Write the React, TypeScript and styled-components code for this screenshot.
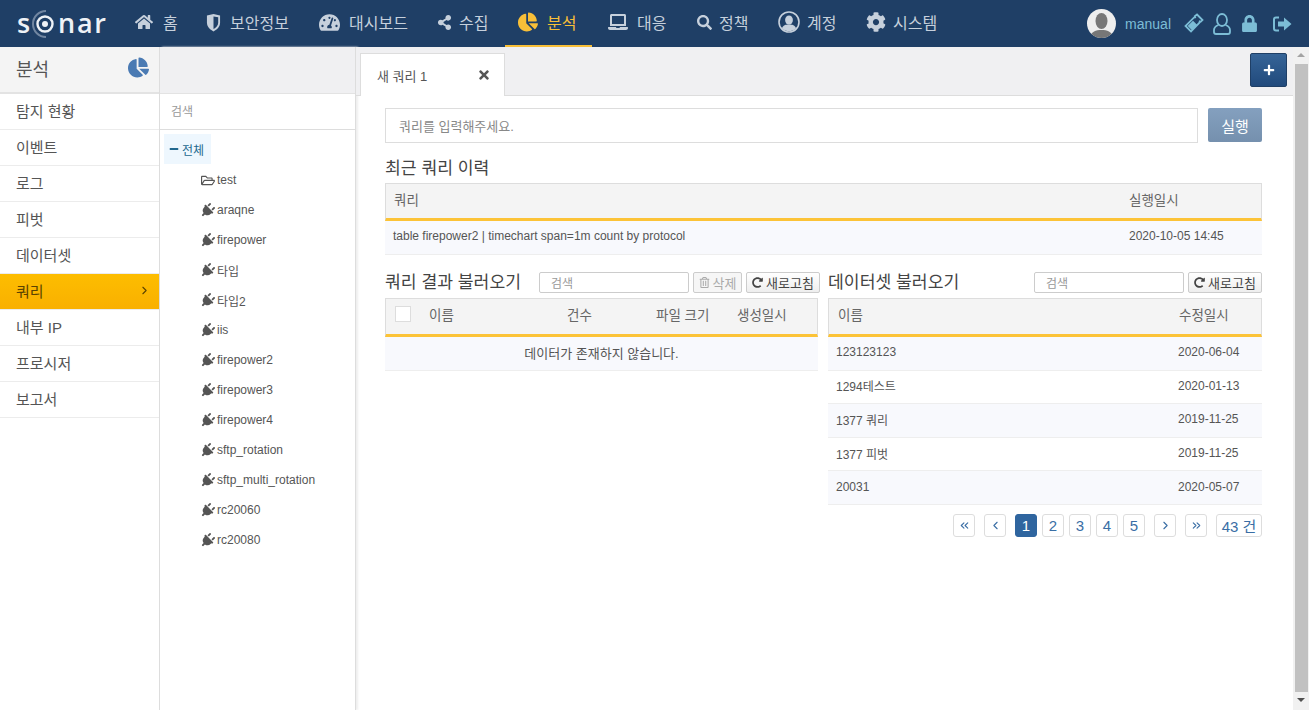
import React from "react";
import styled, { createGlobalStyle } from "styled-components";
import { FaHome, FaShareAlt, FaPlug, FaRegFolderOpen, FaLaptop, FaSearch, FaCog, FaLock, FaTachometerAlt, FaChartPie, FaTimes, FaPlus, FaRedoAlt, FaRegTrashAlt, FaMinus } from "react-icons/fa";
import { ChevronLeft, ChevronRight, ChevronsLeft, ChevronsRight } from "lucide-react";

const Global = createGlobalStyle`
  html, body { margin: 0; padding: 0; height: 100%; overflow: hidden; background: #fff; }
  body { font-family: "Liberation Sans", "Noto Sans CJK KR", sans-serif; color: #555; font-size: 12px; }
  * { box-sizing: border-box; }
`;
const Shell = styled.div`width: 1309px; height: 710px; display: flex; flex-direction: column; overflow: hidden;`;
const Header = styled.header`height: 47px; background: #1f3f66; display: flex; align-items: stretch; flex: none;`;
const Logo = styled.div`width: 122px; flex: none; display: flex; align-items: center; padding: 0 0 2px 17px; color: #eef2f6; font-size: 27px; font-weight: 600; letter-spacing: 1.8px; font-family: "Open Sans", sans-serif;`;
const LogoO = styled.svg`width: 26px; height: 30px; margin: 3px 1px 0 -1px; flex: none;`;
const Nav = styled.nav`display: flex; align-items: stretch; flex: 1;`;
const NavItem = styled.div<{ $on?: boolean; $w: number; $after?: number }>`
  width: ${p => p.$w}px; margin-right: ${p => p.$after ?? 0}px; display: flex; align-items: center; flex: none; padding: 0 0 1px 13px;
  font-size: 16px; white-space: nowrap; color: ${p => (p.$on ? "#f8bf38" : "#c6d0dc")};
  border-bottom: 2px solid ${p => (p.$on ? "#f8bf38" : "transparent")};
`;
const NavIcon = styled.span<{ $w: number; $gap: number; $size: number }>`
  width: ${p => p.$w}px; margin-right: ${p => p.$gap}px; display: flex; justify-content: center; flex: none; font-size: ${p => p.$size}px;
`;
const UserArea = styled.div`display: flex; align-items: center; padding-right: 17px; color: #7cbdd6; font-size: 14px;`;
const Avatar = styled.div`width: 29px; height: 29px; border-radius: 50%; background: #eee; overflow: hidden; margin-right: 9px; svg { display: block; }`;
const UserName = styled.span`margin-right: 12px;`;
const UserIcon = styled.span<{ $w: number; $gap: number; $size?: number }>`display: flex; justify-content: center; width: ${p => p.$w}px; margin-right: ${p => p.$gap}px; font-size: ${p => p.$size ?? 20}px;`;
const Body = styled.div`flex: 1; display: flex; min-height: 0;`;
const Side = styled.aside`width: 160px; flex: none; border-right: 1px solid #ddd; background: #fff;`;
const SideHead = styled.div`height: 47px; background: #f4f4f4; border-bottom: 2px solid #e3e3e3; display: flex; align-items: center; justify-content: space-between; padding: 0 10px 4px 16px; font-size: 18px; color: #555; svg { color: #4a7ab3; font-size: 21px; }`;
const SideItem = styled.div<{ $on?: boolean }>`
  height: 36px; display: flex; align-items: center; justify-content: space-between; padding: 0 8px 3px 16px; font-size: 15px;
  border-bottom: 1px solid #ececec; color: ${p => (p.$on ? "#5a4300" : "#555")};
  background: ${p => (p.$on ? "linear-gradient(#fdbd00,#f9b000)" : "#fff")};
`;
const TreeCol = styled.section`width: 196px; flex: none; border-right: 1px solid #ddd; box-shadow: 2px 0 2px #eee; background: #fff; display: flex; flex-direction: column;`;
const TreeTop = styled.div`height: 47px; background: #f0f0f2; border-bottom: 1px solid #e3e3e3; flex: none;`;
const TreeSearch = styled.div`height: 36px; flex: none; border-bottom: 1px solid #ddd; display: flex; align-items: center; padding: 0 0 2px 11px; color: #999; font-size: 12px;`;
const TreeList = styled.div`padding: 4px 4px; display: flex; flex-direction: column;`;
const TreeRoot = styled.div`height: 30px; width: 47px; margin-bottom: 1px; background: #eef7fe; display: flex; align-items: center; gap: 3px; padding-left: 5px; color: #22688f; font-size: 12px; svg { font-size: 10px; }`;
const TreeLeaf = styled.div`height: 30px; display: flex; align-items: center; gap: 2px; padding-left: 37px; color: #555; font-size: 12px;`;
const PlugIcon = styled(FaPlug)`width: 15px; height: 15px; margin: 0 0 0 -1px; flex: none; transform: rotate(45deg);`;
const FolderIcon = styled(FaRegFolderOpen)`width: 14px; height: 13px; flex: none;`;
const Main = styled.main`flex: 1; min-width: 0; display: flex; flex-direction: column;`;
const TabBar = styled.div`height: 49px; flex: none; background: #f0f0f2; border-bottom: 1px solid #ddd; display: flex; align-items: flex-end; justify-content: space-between; padding: 0 6px 0 4px;`;
const Tab = styled.div`width: 145px; height: 43px; background: #fff; border: 1px solid #ddd; border-bottom: none; display: flex; align-items: center; justify-content: space-between; padding: 0 13px 0 16px; font-size: 13px; margin-bottom: -1px; svg { font-size: 14px; color: #555; }`;
const AddBtn = styled.button`width: 37px; height: 34px; margin-bottom: 8px; border: 1px solid #1f3f66; border-radius: 2px; background: linear-gradient(#366497,#214a7c); color: #fff; display: flex; align-items: center; justify-content: center; padding: 0; font-size: 12px;`;
const Content = styled.div`flex: 1; padding: 12px 31px 0 29px;`;
const QueryRow = styled.div`display: flex; gap: 10px;`;
const QueryInput = styled.div`flex: 1; height: 35px; border: 1px solid #ddd; display: flex; align-items: center; padding-left: 13px; color: #888; font-size: 13px;`;
const RunBtn = styled.div`width: 54px; height: 34px; border-radius: 2px; background: linear-gradient(#84a0bf,#7590ae); color: #fff; display: flex; align-items: center; justify-content: center; font-size: 15px;`;
const Title = styled.h3`margin: 0; font-weight: 400; font-size: 17.2px; color: #444; line-height: 20px;`;
const RecentTitle = styled(Title)`margin: 15px 0 5px;`;
const TableHead = styled.div<{ $h: number; $pad?: number }>`height: ${p => p.$h}px; background: #f4f4f4; border: 1px solid #ddd; border-bottom: 3px solid #fcc337; display: flex; align-items: center; padding: 0 8px 4px ${p => p.$pad ?? 8}px; color: #666; font-size: 13.5px;`;
const Cell = styled.span<{ $w?: number; $flex?: boolean }>`
  ${p => (p.$flex ? "flex: 1;" : `width: ${p.$w}px; flex: none;`)}
`;
const Row = styled.div<{ $alt?: boolean }>`height: 33.6px; display: flex; align-items: center; padding: 0 8px 2px; color: #555; font-size: 12px; background: ${p => (p.$alt ? "#f8f9fd" : "#fff")}; border-bottom: 1px solid #eee;`;
const Empty = styled(Row)`justify-content: center; font-size: 13px;`;
const Columns = styled.div`display: flex; gap: 10px; margin-top: 16.4px;`;
const Col = styled.div<{ $w: number }>`width: ${p => p.$w}px; flex: none;`;
const ColHead = styled.div<{ $over?: number }>`display: flex; align-items: center; height: 24px; margin: 0 ${p => -(p.$over ?? 0)}px 3px 0; gap: 4px;`;
const ColTitle = styled(Title)`flex: 1; padding-bottom: 1px;`;
const SearchBox = styled.div`width: 150px; height: 21px; border: 1px solid #ccc; border-radius: 2px; display: flex; align-items: center; padding-left: 11px; color: #999; font-size: 12px;`;
const SmallBtn = styled.div<{ $off?: boolean; $w: number }>`width: ${p => p.$w}px; height: 21px; border: 1px solid #ccc; border-radius: 2px; display: flex; align-items: center; justify-content: center; gap: 3px; font-size: 13px; background: ${p => (p.$off ? "#f6f6f6" : "linear-gradient(#fff,#eee)")}; color: ${p => (p.$off ? "#aaa" : "#444")}; svg { font-size: 11px; }`;
const Check = styled.span`width: 16px; height: 16px; border: 1px solid #ddd; background: #fff; margin: 0 18px 0 1px; flex: none;`;
const Pager = styled.div`display: flex; justify-content: flex-end; margin-top: 9px; gap: 5px;`;
const Page = styled.div<{ $on?: boolean; $gap?: number; $w?: number }>`
  width: ${p => p.$w ?? 22}px; height: 23px; border: 1px solid #ddd; border-radius: 3px; display: flex; align-items: center; justify-content: center;
  font-size: 15px; margin-right: ${p => p.$gap ?? 0}px;
  color: ${p => (p.$on ? "#fff" : "#3a6ea5")}; background: ${p => (p.$on ? "#2f659f" : "#fff")}; border-color: ${p => (p.$on ? "#2f659f" : "#ddd")};
`;
const Scrollbar = styled.div`width: 16px; flex: none; background: #f1f1f1; display: flex; flex-direction: column; align-items: center;`;
const ArrowUp = styled.div`flex: none; width: 0; height: 0; margin: 6px 0 7px; border-left: 4px solid transparent; border-right: 4px solid transparent; border-bottom: 4px solid #a3a3a3;`;
const ArrowDown = styled.div`flex: none; width: 0; height: 0; margin: 6px 0 8px; border-left: 4px solid transparent; border-right: 4px solid transparent; border-top: 4px solid #505050;`;
const Thumb = styled.div`flex: 1; width: 13px; margin-left: 1px; background: #c1c1c1;`;

const Shield = () => (
  <svg viewBox="0 0 16 20" width="15" height="19">
    <path d="M1 2.500 8 1l7 1.500V10c0 5-4 8-7 9.500C5 18 1 15 1 10z" fill="#c6d0dc" />
    <path d="M8 3.500l5 1V10c0 3.500-2.500 5.500-5 7z" fill="#1f3f66" />
  </svg>
);
const Account = () => (
  <svg viewBox="0 0 22 22" width="22" height="22">
    <circle cx="11" cy="11" r="10" fill="none" stroke="#c6d0dc" strokeWidth="1.600" />
    <ellipse cx="11" cy="9" rx="3.900" ry="4.500" fill="#c6d0dc" />
    <path d="M4 17.500c.8-3.400 3.800-4 7-4s6.200.6 7 4c-3.800 3.400-10.200 3.400-14 0z" fill="#c6d0dc" />
  </svg>
);
const Ticket = () => (
  <svg viewBox="0 0 21 21" width="21" height="21" fill="none" stroke="#7cbdd6" strokeWidth="1.800">
    <path d="M14 1.500 19.500 7l-1.800 1.800-1-.4-.3 1.300L8 18.500 2.500 13l8.300-8.300 1.300-.3-.4-1z" />
    <path d="M6 13l4-4 3 3-4 4z" fill="#7cbdd6" />
  </svg>
);
const UserOutline = () => (
  <svg viewBox="0 0 18 22" width="18" height="22" fill="none" stroke="#7cbdd6" strokeWidth="1.800">
    <ellipse cx="9" cy="7" rx="5" ry="6" />
    <path d="M5.500 12C3 13 1 14.500 1 17v2c0 1.200 1 2 2 2h12c1 0 2-.8 2-2v-2c0-2.500-2-4-4.500-5" />
  </svg>
);
const LogOut = () => (
  <svg viewBox="0 0 19 16" width="19" height="16">
    <path d="M6 1.500H3C1.900 1.500 1 2.400 1 3.500v9c0 1.100.9 2 2 2h3" fill="none" stroke="#7cbdd6" strokeWidth="2" />
    <path d="M5 5.500h6V1.500L18.500 8 11 14.500v-4H5z" fill="#7cbdd6" />
  </svg>
);

const navs: { t: string; i: React.ReactNode; w: number; iw: number; gap: number; size: number; on?: boolean; after?: number }[] = [
  { t: "홈", i: <FaHome />, w: 71, iw: 18, gap: 10, size: 18 },
  { t: "보안정보", i: <Shield />, w: 113, iw: 15, gap: 9, size: 18 },
  { t: "대시보드", i: <FaTachometerAlt />, w: 118, iw: 21, gap: 9, size: 21 },
  { t: "수집", i: <FaShareAlt />, w: 81, iw: 15, gap: 7, size: 15 },
  { t: "분석", i: <FaChartPie />, w: 87, iw: 20, gap: 9, size: 20, on: true, after: 2 },
  { t: "대응", i: <FaLaptop />, w: 89, iw: 21, gap: 9, size: 20 },
  { t: "정책", i: <FaSearch />, w: 82, iw: 16, gap: 7, size: 15 },
  { t: "계정", i: <Account />, w: 88, iw: 22, gap: 7, size: 20 },
  { t: "시스템", i: <FaCog />, w: 100, iw: 20, gap: 7, size: 20 },
];
const sideItems = ["탐지 현황", "이벤트", "로그", "피벗", "데이터셋", "쿼리", "내부 IP", "프로시저", "보고서"];
const leaves = ["araqne", "firepower", "타입", "타입2", "iis", "firepower2", "firepower3", "firepower4", "sftp_rotation", "sftp_multi_rotation", "rc20060", "rc20080"];
const datasets = [["123123123", "2020-06-04"], ["1294테스트", "2020-01-13"], ["1377 쿼리", "2019-11-25"], ["1377 피벗", "2019-11-25"], ["20031", "2020-05-07"]];

export default function App() {
  return (
    <Shell>
      <Global />
      <Header>
        <Logo>
          s
          <LogoO viewBox="0 0 26 30">
            <path d="M15 2A13 13 0 1 0 15 28" fill="none" stroke="#8d9fb5" strokeWidth="2" opacity=".75" />
            <circle cx="14" cy="15" r="7.500" fill="none" stroke="#eef2f6" strokeWidth="2.400" />
            <circle cx="14" cy="15" r="3" fill="#eef2f6" />
          </LogoO>
          nar
        </Logo>
        <Nav>
          {navs.map(n => (
            <NavItem key={n.t} $w={n.w} $on={n.on} $after={n.after}>
              <NavIcon $w={n.iw} $gap={n.gap} $size={n.size}>{n.i}</NavIcon>{n.t}
            </NavItem>
          ))}
        </Nav>
        <UserArea>
          <Avatar>
            <svg viewBox="0 0 29 29" width="29" height="29">
              <ellipse cx="14.500" cy="12" rx="6" ry="8" fill="#777" />
              <path d="M3 29c1-7 6-8 11.500-8s10.500 1 11.500 8z" fill="#777" />
            </svg>
          </Avatar>
          <UserName>manual</UserName>
          <UserIcon $w={21} $gap={9}><Ticket /></UserIcon>
          <UserIcon $w={18} $gap={11}><UserOutline /></UserIcon>
          <UserIcon $w={15} $gap={16} $size={17}><FaLock /></UserIcon>
          <UserIcon $w={19} $gap={0}><LogOut /></UserIcon>
        </UserArea>
      </Header>
      <Body>
        <Side>
          <SideHead>분석<FaChartPie /></SideHead>
          {sideItems.map(s => (
            <SideItem key={s} $on={s === "쿼리"}>{s}{s === "쿼리" && <ChevronRight size={13} strokeWidth={2} />}</SideItem>
          ))}
        </Side>
        <TreeCol>
          <TreeTop />
          <TreeSearch>검색</TreeSearch>
          <TreeList>
            <TreeRoot><FaMinus />전체</TreeRoot>
            <TreeLeaf><FolderIcon />test</TreeLeaf>
            {leaves.map(l => <TreeLeaf key={l}><PlugIcon />{l}</TreeLeaf>)}
          </TreeList>
        </TreeCol>
        <Main>
          <TabBar>
            <Tab>새 쿼리 1<FaTimes /></Tab>
            <AddBtn><FaPlus /></AddBtn>
          </TabBar>
          <Content>
            <QueryRow>
              <QueryInput>쿼리를 입력해주세요.</QueryInput>
              <RunBtn>실행</RunBtn>
            </QueryRow>
            <RecentTitle>최근 쿼리 이력</RecentTitle>
            <TableHead $h={38}><Cell $flex>쿼리</Cell><Cell $w={124}>실행일시</Cell></TableHead>
            <Row $alt><Cell $flex>table firepower2 | timechart span=1m count by protocol</Cell><Cell $w={125}>2020-10-05 14:45</Cell></Row>
            <Columns>
              <Col $w={433}>
                <ColHead $over={2}>
                  <ColTitle>쿼리 결과 불러오기</ColTitle>
                  <SearchBox>검색</SearchBox>
                  <SmallBtn $off $w={49}><FaRegTrashAlt />삭제</SmallBtn>
                  <SmallBtn $w={74}><FaRedoAlt />새로고침</SmallBtn>
                </ColHead>
                <TableHead $h={39}>
                  <Check />
                  <Cell $w={138}>이름</Cell>
                  <Cell $w={89}>건수</Cell>
                  <Cell $w={81}>파일 크기</Cell>
                  <Cell $flex>생성일시</Cell>
                </TableHead>
                <Empty $alt>데이터가 존재하지 않습니다.</Empty>
              </Col>
              <Col $w={434}>
                <ColHead>
                  <ColTitle>데이터셋 불러오기</ColTitle>
                  <SearchBox>검색</SearchBox>
                  <SmallBtn $w={74}><FaRedoAlt />새로고침</SmallBtn>
                </ColHead>
                <TableHead $h={39} $pad={9}><Cell $flex>이름</Cell><Cell $w={74}>수정일시</Cell></TableHead>
                {datasets.map(([n, d], i) => (
                  <Row key={n} $alt={i % 2 === 0}><Cell $flex>{n}</Cell><Cell $w={76}>{d}</Cell></Row>
                ))}
                <Pager>
                  <Page $gap={4}><ChevronsLeft size={13} strokeWidth={2} /></Page>
                  <Page $gap={4}><ChevronLeft size={13} strokeWidth={2} /></Page>
                  <Page $on>1</Page>
                  <Page>2</Page>
                  <Page>3</Page>
                  <Page>4</Page>
                  <Page $gap={4}>5</Page>
                  <Page $gap={4}><ChevronRight size={13} strokeWidth={2} /></Page>
                  <Page $gap={4}><ChevronsRight size={13} strokeWidth={2} /></Page>
                  <Page $w={46}>43 건</Page>
                </Pager>
              </Col>
            </Columns>
          </Content>
        </Main>
        <Scrollbar><ArrowUp /><Thumb /><ArrowDown /></Scrollbar>
      </Body>
    </Shell>
  );
}
